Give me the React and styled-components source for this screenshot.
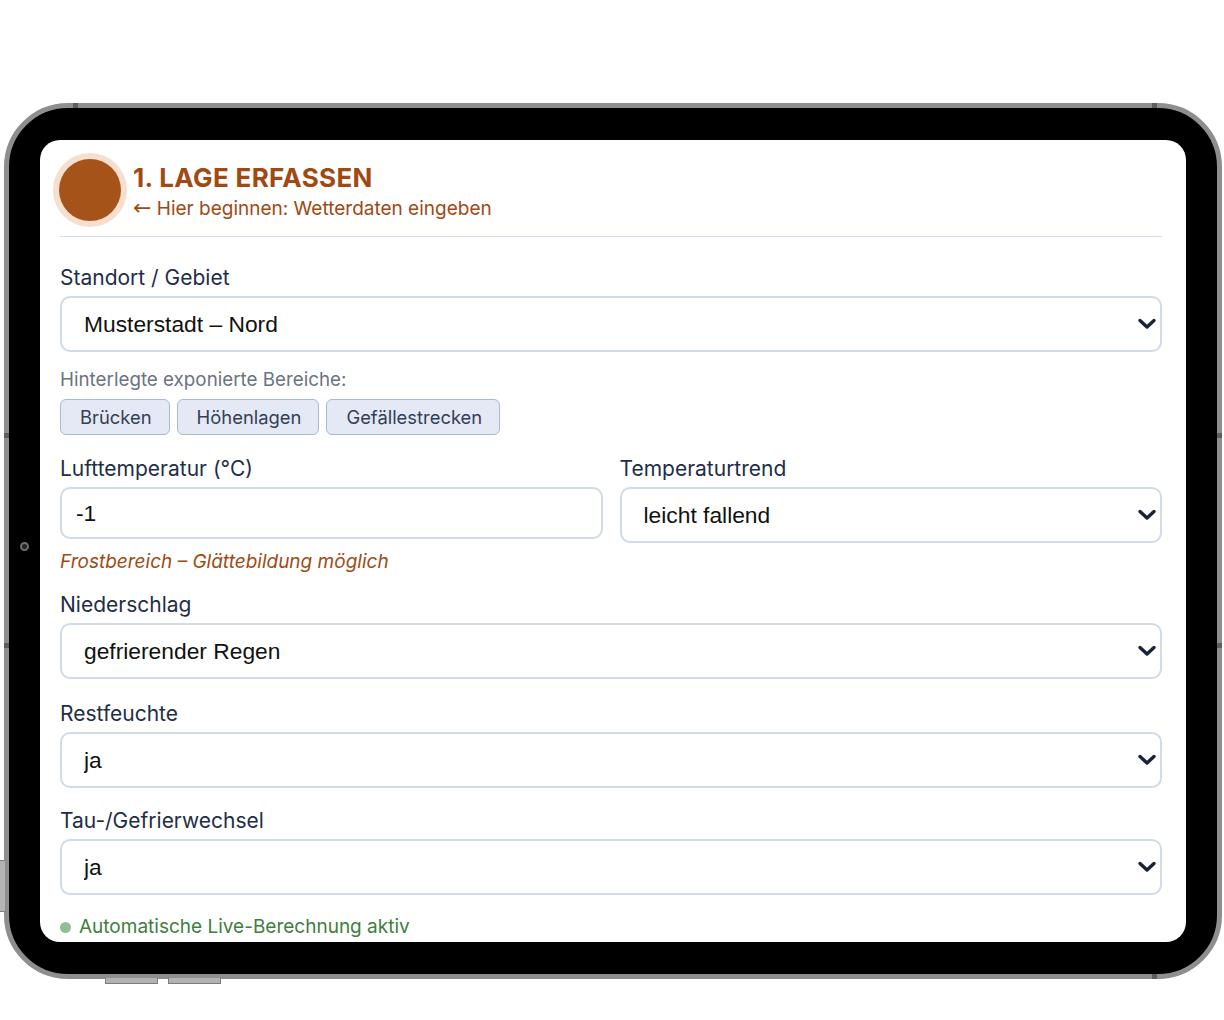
import React from "react";
import styled, { createGlobalStyle } from "styled-components";

const Global = createGlobalStyle`
  html, body { margin: 0; padding: 0; background: #ffffff; }
  body { font-family: Inter, "Noto Sans", sans-serif; }
  * { box-sizing: border-box; }
`;

const Page = styled.div`
  width: 1224px;
  height: 1020px;
  padding: 103px 0 0 4px;
  overflow: hidden;
`;

const Device = styled.div`
  position: relative;
  width: 1218px;
  height: 876px;
  border: 5px solid #8e8e8e;
  border-radius: 64px;
  background: #000;
  padding: 32px 31px;
`;

const Mark = styled.span`
  position: absolute;
  background: #5e5e5e;
  ${(p) => p.$css}
`;

const SideButton = styled.span`
  position: absolute;
  background: #b3b3b3;
  border: 1px solid #7d7d7d;
  ${(p) => p.$css}
`;

const Camera = styled.span`
  position: absolute;
  left: 11px;
  top: 434px;
  width: 9px;
  height: 9px;
  border-radius: 50%;
  background: #222;
  border: 2px solid #6e6e6e;
`;

const Screen = styled.div`
  width: 100%;
  height: 100%;
  background: #fff;
  border-radius: 20px;
  overflow: hidden;
  padding: 19px 24px 0 20px;
`;

const Header = styled.header`
  display: flex;
  align-items: flex-start;
  gap: 12px;
  padding-bottom: 15px;
  border-bottom: 1px solid #d3dce8;
`;

const Badge = styled.div`
  width: 62px;
  height: 62px;
  border-radius: 50%;
  background: #a6531a;
  box-shadow: 0 0 0 6px #f6dfcf;
  margin-left: -1px;
  flex: none;
`;

const TitleBlock = styled.div`
  display: flex;
  flex-direction: column;
  padding-top: 4px;
`;

const Title = styled.h1`
  margin: 0;
  font-size: 26px;
  line-height: 30px;
  font-weight: 700;
  letter-spacing: 0.35px;
  color: #a04a13;
`;

const Subtitle = styled.div`
  margin-top: 4px;
  height: 24px;
  font-size: 19px;
  line-height: 24px;
  color: #a04a13;
`;

const Arrow = styled.span`
  font-family: "DejaVu Sans", sans-serif;
  font-size: 22px;
  line-height: 0;
`;

const Form = styled.div`
  display: flex;
  flex-direction: column;
  gap: 21px;
  padding-top: 29px;
`;

const Field = styled.div`
  display: flex;
  flex-direction: column;
  margin-top: ${(p) => p.$offset || 0}px;
`;

const Label = styled.label`
  font-size: 21px;
  line-height: 24px;
  color: #1f2e47;
  margin-bottom: 6px;
`;

const SelectWrap = styled.div`
  position: relative;
  height: 56px;
`;

const Select = styled.select`
  appearance: none;
  -webkit-appearance: none;
  width: 100%;
  height: 100%;
  border: 2px solid #d0dae9;
  border-radius: 10px;
  background: #fff;
  padding: 0 48px 0 22px;
  font-family: "Liberation Sans", Arial, sans-serif;
  font-size: 22.8px;
  color: #111;
  outline: none;
`;

const Chevron = styled.svg`
  position: absolute;
  right: 5px;
  top: 50%;
  transform: translateY(-50%);
  pointer-events: none;
`;

const Input = styled.input`
  width: 100%;
  height: 52px;
  border: 2px solid #d0dae9;
  border-radius: 10px;
  padding: 0 14px;
  font-family: "Liberation Sans", Arial, sans-serif;
  font-size: 22.8px;
  color: #111;
  outline: none;
`;

const Hint = styled.div`
  margin-top: 17px;
  font-size: 18.8px;
  line-height: 22px;
  color: #6b7380;
`;

const Chips = styled.div`
  display: flex;
  gap: 7px;
  margin-top: 8px;
`;

const Chip = styled.button`
  height: 36px;
  padding: 0 17px 0 19px;
  border: 1.5px solid #a9bad5;
  border-radius: 6px;
  background: #e4e9f5;
  font-family: Inter, sans-serif;
  font-size: 18.4px;
  color: #334155;
`;

const Row = styled.div`
  display: grid;
  grid-template-columns: 1fr 1fr;
  column-gap: 17px;
  align-items: start;
`;

const Warning = styled.div`
  margin-top: 9px;
  font-size: 19px;
  line-height: 20px;
  font-style: italic;
  color: #a04a13;
`;

const Live = styled.div`
  display: flex;
  align-items: center;
  gap: 8px;
  font-size: 19px;
  line-height: 22px;
  color: #3e7e3e;
`;

const Dot = styled.span`
  width: 11px;
  height: 11px;
  border-radius: 50%;
  background: #8fbe99;
`;

function SelectField({ value, options }) {
  return (
    <SelectWrap>
      <Select defaultValue={value}>
        {options.map((o) => (
          <option key={o}>{o}</option>
        ))}
      </Select>
      <Chevron width="20" height="12" viewBox="0 0 20 12">
        <polyline
          points="3,2.5 10,9 17,2.5"
          fill="none"
          stroke="#17233d"
          strokeWidth="3.4"
          strokeLinecap="round"
          strokeLinejoin="round"
        />
      </Chevron>
    </SelectWrap>
  );
}

export default function App() {
  return (
    <Page>
      <Global />
      <Device>
        <Mark $css="top:-5px;left:64px;width:5px;height:5px;" />
        <Mark $css="top:-5px;right:60px;width:5px;height:5px;" />
        <Mark $css="bottom:-5px;right:60px;width:5px;height:5px;" />
        <Mark $css="left:-5px;top:325px;width:5px;height:5px;" />
        <Mark $css="left:-5px;top:535px;width:5px;height:5px;" />
        <Mark $css="right:-5px;top:325px;width:5px;height:5px;" />
        <Mark $css="right:-5px;top:535px;width:5px;height:5px;" />
        <SideButton $css="left:-10px;top:752px;width:6px;height:52px;border-right:none;" />
        <SideButton $css="bottom:-10px;left:96px;width:53px;height:6px;border-top:none;" />
        <SideButton $css="bottom:-10px;left:159px;width:53px;height:6px;border-top:none;" />
        <Camera />
        <Screen>
          <Header>
            <Badge />
            <TitleBlock>
              <Title>1. LAGE ERFASSEN</Title>
              <Subtitle>
                <Arrow>←</Arrow> Hier beginnen: Wetterdaten eingeben
              </Subtitle>
            </TitleBlock>
          </Header>
          <Form>
            <Field>
              <Label>Standort / Gebiet</Label>
              <SelectField value="Musterstadt – Nord" options={["Musterstadt – Nord", "Musterstadt – Süd"]} />
              <Hint>Hinterlegte exponierte Bereiche:</Hint>
              <Chips>
                <Chip>Brücken</Chip>
                <Chip>Höhenlagen</Chip>
                <Chip>Gefällestrecken</Chip>
              </Chips>
            </Field>
            <Field $offset={1}>
              <Row>
                <Field>
                  <Label>Lufttemperatur (°C)</Label>
                  <Input defaultValue="-1" />
                </Field>
                <Field>
                  <Label>Temperaturtrend</Label>
                  <SelectField value="leicht fallend" options={["steigend", "gleichbleibend", "leicht fallend", "stark fallend"]} />
                </Field>
              </Row>
              <Warning>Frostbereich – Glättebildung möglich</Warning>
            </Field>
            <Field>
              <Label>Niederschlag</Label>
              <SelectField value="gefrierender Regen" options={["kein", "Regen", "gefrierender Regen", "Schnee"]} />
            </Field>
            <Field $offset={2}>
              <Label>Restfeuchte</Label>
              <SelectField value="ja" options={["ja", "nein"]} />
            </Field>
            <Field>
              <Label>Tau-/Gefrierwechsel</Label>
              <SelectField value="ja" options={["ja", "nein"]} />
            </Field>
            <Live>
              <Dot />
              Automatische Live-Berechnung aktiv
            </Live>
          </Form>
        </Screen>
      </Device>
    </Page>
  );
}
